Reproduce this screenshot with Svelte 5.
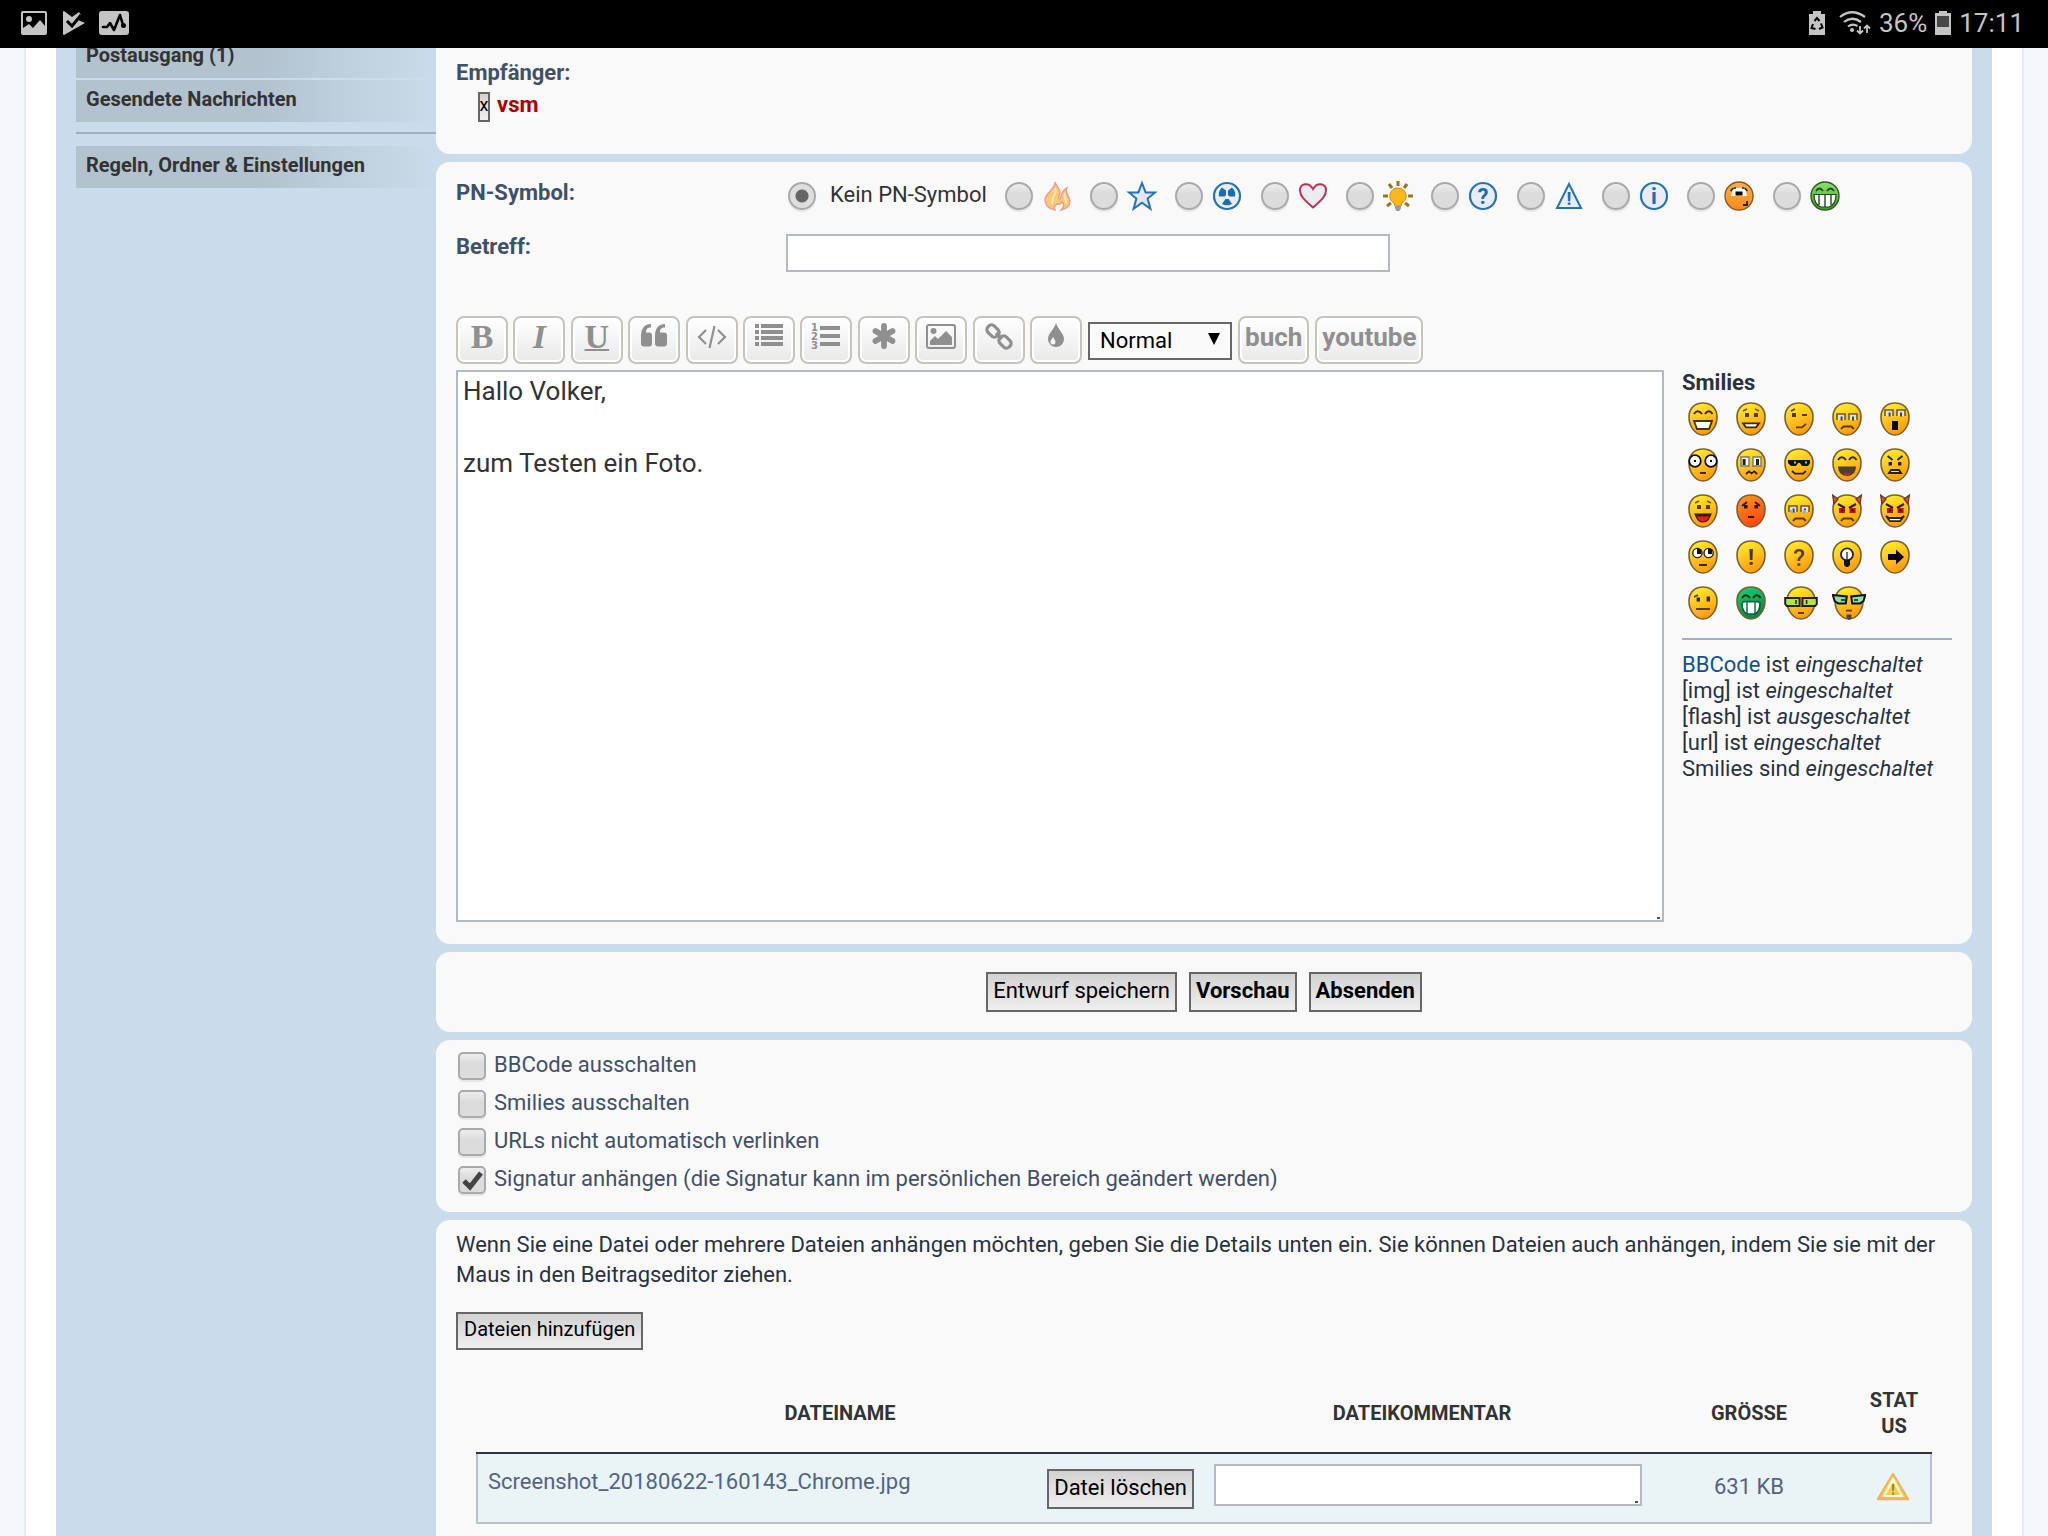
<script lang="ts">
	type Smiley = { name: string; fill?: string; wide?: boolean; art: string };

	let message = 'Hallo Volker,\n\nzum Testen ein Foto.';
	let subject = '';
	let comment = '';
	let icon = 'none';
	let size = 'Normal';

	const options = [
		{ id: 'bbcode', label: 'BBCode ausschalten', checked: false },
		{ id: 'smilies', label: 'Smilies ausschalten', checked: false },
		{ id: 'urls', label: 'URLs nicht automatisch verlinken', checked: false },
		{
			id: 'sig',
			label: 'Signatur anhängen (die Signatur kann im persönlichen Bereich geändert werden)',
			checked: true
		}
	];

	const status = [
		{ tag: '[img]', verb: 'ist', state: 'eingeschaltet' },
		{ tag: '[flash]', verb: 'ist', state: 'ausgeschaltet' },
		{ tag: '[url]', verb: 'ist', state: 'eingeschaltet' },
		{ tag: 'Smilies', verb: 'sind', state: 'eingeschaltet' }
	];

	const ring = '<circle cx="16" cy="16" r="13" fill="#e9edf2" stroke="#2273b8" stroke-width="2.2"/>';

	const symbols = [
		{ name: 'Feuer', art: '<path d="M14 2c1 4 5 6 5 10c0 3-2 4-1 7c3 0 1-8 8-11c-3 5 3 8 3 13c0 5-4 8-9 9c4-4 3-7 1-8c-1 2-3 3-5 2c-3 2-3 4-2 6c-6-1-10-5-10-11c1-7 10-9 10-17z" fill="#fbc877" stroke="#ef9c8c" stroke-width="1.400"/><path d="M14 8c2 5-1 7-2 10c-1 2 0 4-1 6M24 13c-2 4 2 6 1 10" fill="none" stroke="#ffeec4" stroke-width="1.800"/>' },
		{ name: 'Stern', art: '<path d="M16 3l3.600 9.400h9.400l-7.400 6.200l2.800 10.200l-8.400-6l-8.400 6l2.800-10.200l-7.400-6.200h9.400z" fill="#e4e8ee" stroke="#2273b8" stroke-width="2"/>' },
		{ name: 'Radioaktiv', art: ring + '<g fill="#1b6cb4"><path d="M11 7.500l4 3v4.500l-1.500 1.500H8Q7 11 11 7.500z"/><path d="M21 7.500l-4 3v4.500l1.500 1.500H24Q25 11 21 7.500z"/><path d="M14.500 19h3l3.500 5q-5 2.600-10 0z"/></g>' },
		{ name: 'Herz', art: '<path d="M16 27.500C10 22 3 17 3 10.500C3 3 12 2 16 9C20 2 29 3 29 10.500C29 17 22 22 16 27.500z" fill="#e9ecf0" stroke="#bd3453" stroke-width="2"/>' },
		{ name: 'Glühbirne', art: '<g stroke="#9a7426" stroke-width="3"><path d="M16 1v5M7 4l3 4M25 4l-3 4M1 16h5M26 16h5M5 26l4-3M27 26l-4-3"/></g><path d="M16 8a8 8 0 0 1 4 15l-1 3h-6l-1-3A8 8 0 0 1 16 8z" fill="#fdb81e" stroke="#d08c1e"/><path d="M13 26h6v2l-1.500 3h-3L13 28z" fill="#9a9a9a"/>' },
		{ name: 'Frage', art: ring + '<text x="16" y="24" font-family="Roboto" font-weight="700" font-size="22" text-anchor="middle" fill="#1b6cb4">?</text>' },
		{ name: 'Achtung', art: '<path d="M16 4L28 28H4z" fill="#e9edf2" stroke="#2273b8" stroke-width="2"/><text x="16" y="25" font-family="Roboto" font-weight="700" font-size="18" text-anchor="middle" fill="#1b6cb4">!</text>' },
		{ name: 'Info', art: ring + '<text x="16" y="24" font-family="Roboto" font-weight="700" font-size="22" text-anchor="middle" fill="#1b6cb4">i</text>' },
		{ name: 'Orange', art: '<circle cx="16" cy="16" r="14" fill="url(#orange)" stroke="#8a5a22" stroke-width="1.400"/><path d="M10 8h12l2 8H8z" fill="#fff"/><path d="M7.500 11l3-3M24.500 11l-3-3M11 8h2M19 8h2" stroke="#222" stroke-width="1.600"/><path d="M12.500 11.500h7v4h-7z" fill="#000"/><path d="M20 25h4v-4" fill="none" stroke="#222" stroke-width="1.800"/>' },
		{ name: 'Grün', art: '<circle cx="16" cy="16" r="14" fill="url(#lime)" stroke="#2c5e20" stroke-width="1.400"/><path d="M7 11q3.500-5 7 0M18 11q3.500-5 7 0" fill="none" stroke="#1d4d12" stroke-width="1.800"/><path d="M5 14.500h22q0 10-7 12.500h-8Q5 24.500 5 14.500z" fill="#fff" stroke="#1d4d12" stroke-width="1.200"/><path d="M10 14v11M16 14v13M22 14v11" stroke="#1d4d12" stroke-width="1.400"/>' }
	];

	const dots = '<path d="M4.500 5.500h2v2h-2zM9 5.500h2v2H9z" fill="#5a3c00"/><path d="M3.500 4.500l2-1M11.500 4.500l-2-1" stroke="#7a5600" stroke-width=".7"/>';
	const arcs = '<path d="M3 6q1.800-2.800 4 0M8.500 6q1.800-2.800 3.800 0" fill="none" stroke="#3a2800" stroke-width="1"/>';
	const frown = '<path d="M4.500 13.500l1.200-1.200h4l1.200 1.200" fill="none" stroke="#5a3c00" stroke-width="1"/>';
	const angry = '<path d="M3 5l3.500 2M12 5L8.500 7" stroke="#222" stroke-width="1.100"/><path d="M3.500 7h3v2.500h-3zM8.800 7h3v2.500h-3z" fill="#c01010"/><path d="M4.600 7.600h1v1h-1zM9.800 7.600h1v1h-1z" fill="#300"/>';
	const horns = '<path d="M.300.500L3 2.500L1 5zM14.700.500L12 2.500L14 5z" fill="#e2502c" stroke="#6a3020" stroke-width=".6"/>';
	const boxes = '<path d="M2.500 9V6h4v3M8.500 9V6h4v3" fill="#dfe3de" stroke="#6c5a2c" stroke-width=".8"/><path d="M4.300 7.300h1v2h-1zM10 7.300h1v2h-1z" fill="#444"/>';

	const smilies: Smiley[] = [
		{ name: 'Sehr fröhlich', art: arcs + '<path d="M3 9.500h9l-1.500 4h-6z" fill="#fff" stroke="#4a3200" stroke-width=".9"/>' },
		{ name: 'Lächeln', art: dots + '<path d="M3.500 10.700h8l-1.500 2h-5z" fill="#fff" stroke="#3a2800" stroke-width=".9"/>' },
		{ name: 'Zwinkern', art: '<path d="M4 5.500h2v2H4z" fill="#5a3c00"/><path d="M3.500 4.500l2-1M9 6.500h2.500M6 12.700h3l2-1.700" fill="none" stroke="#5a3c00" stroke-width=".9"/>' },
		{ name: 'Traurig', art: boxes + frown },
		{ name: 'Überrascht', art: '<g transform="translate(0 -2)">' + boxes + '</g><path d="M6 9.500h3v4.500H6z" fill="#000"/>' },
		{ name: 'Schockiert', art: '<g fill="#fff" stroke="#111" stroke-width=".9"><circle cx="3.500" cy="6.500" r="2.900"/><circle cx="11.500" cy="6.500" r="2.900"/></g><path d="M3 6h1v1H3zM11 6h1v1h-1z" fill="#000"/><path d="M6 12.500h3" stroke="#3a2800"/>' },
		{ name: 'Verwirrt', art: '<path d="M2.500 4.500h4v4.500h-4zM8.500 4.500h4v4.500h-4z" fill="#fff" stroke="#777" stroke-width=".7"/><path d="M3.300 5.500h1.500v3H3.300zM10 5.500h1.500v3H10z" fill="#222"/><path d="M5 13l1.500-1.300l1.300 1l1.300-1l1.500 1.300" fill="none" stroke="#222" stroke-width=".9"/>' },
		{ name: 'Cool', art: '<path d="M2 6h11v1.500l-1 1.500H9L8 7.500H7L6 9H3.500L2 7.500z" fill="#111"/><path d="M5 6.700h1v1H5zM10.500 6.700h1v1h-1z" fill="#bbb"/><path d="M4 11.500l1.500 1.300h4l1.500-1.300" fill="none" stroke="#222" stroke-width=".9"/>' },
		{ name: 'Lachen', art: arcs + '<path d="M3 9.200h9q0 4.500-4.500 4.800Q3 13.700 3 9.200z" fill="#4a4034"/><path d="M6 12.500h3l-.5 1.300h-2z" fill="#d02030"/>' },
		{ name: 'Verärgert', art: '<path d="M3.800 4l2.500 2M11.200 4L8.700 6" stroke="#222" stroke-width=".9"/><path d="M4.300 7h1.700v1.700H4.300zM9 7h1.700v1.700H9z" fill="#222"/><path d="M4.500 12.500l1-1.500h4l1 1.500z" fill="#ddd" stroke="#222" stroke-width=".9"/>' },
		{ name: 'Zunge', art: dots + '<path d="M3 9.800h9l-1 1.700H4z" fill="#3a1800"/><path d="M4 11h7q-1 3-3.500 3T4 11z" fill="#ee1a1a" stroke="#4a1a00" stroke-width=".6"/>' },
		{ name: 'Verlegen', fill: 'url(#red)', art: '<path d="M3 6l2.500-2M12 6L9.500 4M6 11.500h3" stroke="#3a1800" stroke-width="1"/><path d="M4 5.500h1.800v1.800H4zM9.200 5.500H11v1.800H9.200z" fill="#3a1800"/>' },
		{ name: 'Weinen', art: boxes + '<path d="M3 8h1.500v1.500H3zM9.500 8H11v1.500H9.500z" fill="#7bb8de"/>' + frown },
		{ name: 'Böse', art: horns + angry + frown },
		{ name: 'Teufel', art: horns + angry + '<path d="M3 11l1.500 1h6l1.500-1l-2 2.600h-5z" fill="#fff" stroke="#222" stroke-width=".9"/>' },
		{ name: 'Augen rollen', art: '<g fill="#fff" stroke="#222" stroke-width=".7"><circle cx="4.700" cy="6.500" r="2.300"/><circle cx="10.300" cy="6.500" r="2.300"/></g><path d="M4.500 4.500h2v2.500h-2zM10 4.500h2v2.500h-2z" fill="#111"/><path d="M5.500 12.500h4" stroke="#3a2800"/>' },
		{ name: 'Ausruf', art: '<text x="7.500" y="12.500" font-family="Roboto" font-weight="700" font-size="11" text-anchor="middle" fill="#4a3200">!</text>' },
		{ name: 'Frage', art: '<text x="7.500" y="13" font-family="Roboto" font-weight="500" font-size="12" text-anchor="middle" fill="#5a3c00">?</text>' },
		{ name: 'Idee', art: '<circle cx="7.500" cy="7.200" r="3" fill="#fff" stroke="#222" stroke-width=".9"/><path d="M7.200 6h.6v4h1.200v2.500l-1 1H7l-1-1V10h1.200z" fill="#111"/>' },
		{ name: 'Pfeil', art: '<path d="M4 7h4V4.800l4 3.700l-4 3.700V10H4z" fill="#000"/>' },
		{ name: 'Neutral', art: '<path d="M4.300 5.800H6v2H4.300zM9.300 5.200H11v2.600H9.300z" fill="#3a2800"/><path d="M3 5.500l2-1M4 11.500h7" stroke="#5a3c00" stroke-width=".9"/>' },
		{ name: 'Mr. Green', fill: 'url(#green)', art: arcs + '<path d="M3 8.500l1-.7h7l1 .7q0 5-3 5.500H6Q3 13.500 3 8.500z" fill="#fff" stroke="#063" stroke-width=".8"/><path d="M5.500 8v5.500M9.500 8v5.500" stroke="#063" stroke-width=".7"/>' },
		{ name: 'Geek', wide: true, art: '<path d="M-.400 6h7.200v4H.400L-.400 9zM8.200 6h7.200v3l-.8 1H8.200z" fill="#b4e838" stroke="#222" stroke-width="1"/><path d="M5 7v2M10.300 7v2" stroke="#232" stroke-width=".8"/><path d="M6 13.500h3" stroke="#5a3c00"/>' },
		{ name: 'Ober-Geek', wide: true, art: '<path d="M-.600 4.500l7 .700l-.500 3.500H2L.300 7.500zM15.600 4.500l-7 .700l.500 3.500h4l1.700-1.200z" fill="#8fdcb4" stroke="#111" stroke-width="1"/><path d="M3.500 7h2M10 7h2" stroke="#253" stroke-width=".9"/><path d="M6 12.300h3" stroke="#5a3c00" stroke-width=".9"/><path d="M6.300 14.300h2.400v1.700l-1.200 1l-1.200-1z" fill="#444"/>' }
	];

	const tools = [
		{ name: 'Zitat', art: '<path d="M2 14c0-7 3-12 10-12v3.500c-4 0-5 2-5 5h3a3 3 0 0 1 3 3v8a3 3 0 0 1-3 3H5a3 3 0 0 1-3-3zM16 14c0-7 3-12 10-12v3.500c-4 0-5 2-5 5h4a3 3 0 0 1 3 3v8a3 3 0 0 1-3 3h-6a3 3 0 0 1-3-3z" fill="#8f8f8f"/>' },
		{ name: 'Code', art: '<path d="M9 8l-7 7l7 7M21 8l7 7l-7 7M17.500 4l-5 22" fill="none" stroke="#8f8f8f" stroke-width="2.200"/>' },
		{ name: 'Liste', art: '<path d="M1 2h4v4H1zM7 2h22v4H7zM1 8h4v4H1zM7 8h22v4H7zM1 14h4v4H1zM7 14h22v4H7zM1 20h4v4H1zM7 20h22v4H7z" fill="#8f8f8f"/>' },
		{ name: 'Nummerierte Liste', art: '<path d="M9 4h20v4H9zM9 12h20v4H9zM9 20h20v4H9z" fill="#8f8f8f"/><g font-family="DejaVu Sans" font-weight="700" font-size="10" fill="#8f8f8f"><text x="0" y="9">1</text><text x="0" y="18">2</text><text x="0" y="27">3</text></g>' },
		{ name: 'Listenpunkt', art: '<path d="M15 4v20M6.500 9l17 10M23.500 9l-17 10" stroke="#8f8f8f" stroke-width="5.800" stroke-linecap="round"/>' },
		{ name: 'Bild', art: '<rect x="1" y="3" width="28" height="23" rx="2" fill="none" stroke="#8f8f8f" stroke-width="2"/><circle cx="7.500" cy="9" r="3" fill="#8f8f8f"/><path d="M4 23v-4l5-5l3 3l8-8l6 6v8z" fill="#8f8f8f"/>' },
		{ name: 'Link', art: '<g fill="none" stroke="#8f8f8f" stroke-width="3.200"><rect x="2.500" y="4.500" width="13" height="9" rx="4" transform="rotate(45 9 9)"/><rect x="14.500" y="15.500" width="13" height="9" rx="4" transform="rotate(45 21 20)"/><path d="M12 11l6 6"/></g>' },
		{ name: 'Farbe', art: '<path d="M15 1c2 7 8 10 8 16a8 8 0 0 1-16 0c0-6 6-9 8-16z" fill="#8f8f8f"/><path d="M12 15c1 2 2.500 3 2.500 5a2.500 2.500 0 0 1-5 0c0-2 1.500-3 2.500-5z" fill="#f5f5f5"/>' }
	];
</script>

<svg class="defs" aria-hidden="true">
	<defs>
		<linearGradient id="yellow" x1="0" y1="0" x2="0.4" y2="1">
			<stop offset="0.1" stop-color="#ffee2a" />
			<stop offset="1" stop-color="#ff9d12" />
		</linearGradient>
		<linearGradient id="red" x1="0" y1="0" x2="0.4" y2="1">
			<stop offset="0" stop-color="#ff9a24" />
			<stop offset="1" stop-color="#ff4a10" />
		</linearGradient>
		<linearGradient id="green" x1="0" y1="0" x2="0.4" y2="1">
			<stop offset="0" stop-color="#12d873" />
			<stop offset="1" stop-color="#07874e" />
		</linearGradient>
		<linearGradient id="orange" x1="0" y1="0" x2="0" y2="1">
			<stop offset="0" stop-color="#ffb04a" />
			<stop offset="1" stop-color="#f98a1c" />
		</linearGradient>
		<linearGradient id="lime" x1="0" y1="0" x2="0" y2="1">
			<stop offset="0" stop-color="#8fe070" />
			<stop offset="1" stop-color="#3f9a2c" />
		</linearGradient>
		<linearGradient id="warn" x1="0" y1="0" x2="0" y2="1">
			<stop offset="0" stop-color="#fff3b8" />
			<stop offset="1" stop-color="#f3c43c" />
		</linearGradient>
	</defs>
</svg>

<div class="screen">
	<header class="statusbar">
		<div class="notifications">
			<svg width="26" height="24" viewBox="0 0 26 24">
				<path fill-rule="evenodd" d="M2 0h22a2 2 0 0 1 2 2v20a2 2 0 0 1-2 2H2a2 2 0 0 1-2-2V2a2 2 0 0 1 2-2zM2 2v15l6-4l4 4l7-8l5 6V2zM8 5a3 3 0 1 1 0 6a3 3 0 0 1 0-6z" fill="#c4c4c4" />
			</svg>
			<svg width="24" height="24" viewBox="0 0 24 24">
				<path d="M3 0l8 6L18 1l2 3l-3 5l7 3L3 24q-1 0-1-1V1q0-1 1-1z" fill="#c4c4c4" />
				<path d="M6 10l5 5l9-11" fill="none" stroke="#000" stroke-width="3" />
			</svg>
			<svg width="30" height="24" viewBox="0 0 30 24">
				<rect width="30" height="24" rx="3" fill="#c4c4c4" />
				<path d="M4 16h4l3-4l4 7l6-15l3 10" fill="none" stroke="#000" stroke-width="2.6" stroke-linejoin="round" stroke-linecap="round" />
				<circle cx="24.500" cy="14.500" r="2.500" />
			</svg>
		</div>
		<div class="system">
			<svg width="16" height="24" viewBox="0 0 16 24">
				<path d="M0 3h4V0h8v3h4v21H0z" fill="#c4c4c4" />
				<path d="M5.500 10L8 7l2.500 3M12 12.500l1.500 4L10 18M6.500 18l-4-1l1.500-4" fill="none" stroke="#000" stroke-width="2" />
			</svg>
			<svg class="wifi" width="32" height="24" viewBox="0 0 32 24">
				<g fill="none" stroke="#c4c4c4" stroke-width="2.200">
					<path d="M1 6q12-9.500 25 0M5 11q8-6.500 17 0M9 15.500q4.500-3.500 9.500-.5" />
					<path d="M21 15v7M18 19.500l3 3l3-3M28 22v-7M25 17.500l3-3l3 3" stroke-width="1.800" />
				</g>
				<circle cx="13" cy="19" r="2" fill="#c4c4c4" />
			</svg>
			<span>36%</span>
			<svg width="16" height="24" viewBox="0 0 16 24">
				<path d="M0 2h4V0h8v2h4v22H0z" fill="#c4c4c4" />
				<path d="M2 5h12v11H2z" fill="#484848" />
			</svg>
			<span>17:11</span>
		</div>
	</header>

	<div class="wrap">
		<div class="panel">
			<nav class="menu">
				<a href="#outbox">Postausgang (1)</a>
				<a href="#sent">Gesendete Nachrichten</a>
				<hr />
				<a href="#options">Regeln, Ordner &amp; Einstellungen</a>
			</nav>

			<main>
				<section class="card recipients">
					<strong class="caption">Empfänger:</strong>
					<div class="recipient">
						<button class="btn remove" aria-label="vsm entfernen">x</button>
						<a href="#vsm">vsm</a>
					</div>
				</section>

				<section class="card editor">
					<div class="field">
						<span class="caption">PN-Symbol:</span>
						<div class="symbols">
							<label class="none">
								<input type="radio" value="none" bind:group={icon} />
								<span>Kein PN-Symbol</span>
							</label>
							<div class="symbol-list">
								{#each symbols as s}
									<label>
										<input type="radio" value={s.name} bind:group={icon} aria-label={s.name} />
										<svg width="32" height="32" viewBox="0 0 32 32">{@html s.art}</svg>
									</label>
								{/each}
							</div>
						</div>
					</div>
					<div class="field subject">
						<label class="caption" for="subject">Betreff:</label>
						<input id="subject" type="text" bind:value={subject} />
					</div>

					<div class="toolbar">
						<div class="tools">
							<button class="tool letter" aria-label="Fett">B</button>
							<button class="tool letter italic" aria-label="Kursiv">I</button>
							<button class="tool letter under" aria-label="Unterstrichen">U</button>
							{#each tools as t}
								<button class="tool" aria-label={t.name}>
									<svg width="30" height="30" viewBox="0 0 30 30">{@html t.art}</svg>
								</button>
							{/each}
						</div>
						<div class="size">
							<select aria-label="Schriftgröße" bind:value={size}>
								<option>Sehr klein</option>
								<option>Klein</option>
								<option>Normal</option>
								<option>Groß</option>
							</select>
						</div>
						<button class="tool word">buch</button>
						<button class="tool word">youtube</button>
					</div>

					<div class="compose">
						<div class="grip message">
							<textarea aria-label="Nachricht" spellcheck="false" bind:value={message}></textarea>
						</div>
						<aside>
							<strong>Smilies</strong>
							<div class="smilies">
								{#each smilies as s}
									<a href="#smiley" aria-label={s.name}>
										<svg
											width={s.wide ? 34 : 30}
											height="34"
											viewBox={s.wide ? '-1 0 17 17' : '0 0 15 17'}
										>
											<path
												d="M7.500.500C11.800.500 14.500 3.400 14.500 7.500C14.500 12 11.500 16.500 7.500 16.500C3.500 16.500.500 12 .500 7.500C.500 3.400 3.200.500 7.500.500z"
												fill={s.fill ?? 'url(#yellow)'}
												stroke="#7d6030"
												stroke-width=".8"
											/>
											{@html s.art}
										</svg>
									</a>
								{/each}
							</div>
							<hr />
							<p><a href="#bbcode">BBCode</a> ist <em>eingeschaltet</em></p>
							{#each status as s}
								<p>{s.tag} {s.verb} <em>{s.state}</em></p>
							{/each}
						</aside>
					</div>
				</section>

				<section class="card actions">
					<button class="btn">Entwurf speichern</button>
					<button class="btn bold">Vorschau</button>
					<button class="btn bold">Absenden</button>
				</section>

				<section class="card options">
					{#each options as o}
						<label><input type="checkbox" bind:checked={o.checked} /><span>{o.label}</span></label>
					{/each}
				</section>

				<section class="card attachments">
					<p>
						Wenn Sie eine Datei oder mehrere Dateien anhängen möchten, geben Sie die Details unten ein. Sie
						können Dateien auch anhängen, indem Sie sie mit der Maus in den Beitragseditor ziehen.
					</p>
					<button class="btn add">Dateien hinzufügen</button>
					<table>
						<thead>
							<tr>
								<th>DATEINAME</th>
								<th class="col-comment">DATEIKOMMENTAR</th>
								<th class="col-size">GRÖSSE</th>
								<th class="col-status">STATUS</th>
							</tr>
						</thead>
						<tbody>
							<tr>
								<td>
									<div class="file">
										<a href="#file">Screenshot_20180622-160143_Chrome.jpg</a>
										<button class="btn">Datei löschen</button>
									</div>
								</td>
								<td class="col-comment">
									<div class="grip">
										<textarea aria-label="Dateikommentar" bind:value={comment}></textarea>
									</div>
								</td>
								<td class="col-size">631 KB</td>
								<td class="col-status">
									<svg width="34" height="30" viewBox="0 0 34 30">
										<path d="M17 2L32 27H2z" fill="url(#warn)" stroke="#ebb75c" stroke-width="2.400" stroke-linejoin="round" />
										<path d="M17 8l9 16H8z" fill="#f0d04e" stroke="#fff8d8" stroke-width="2" />
										<path d="M15.800 12h2.600l-.5 7h-1.600zM16 20.500h2.200v2.200H16z" fill="#a88624" />
									</svg>
								</td>
							</tr>
						</tbody>
					</table>
				</section>
			</main>
		</div>
	</div>
</div>

<style>
	:global(body) {
		margin: 0;
		background: #f5f7fa;
	}

	.screen,
	.screen * {
		box-sizing: border-box;
	}

	.defs {
		position: absolute;
		width: 0;
		height: 0;
	}

	.screen {
		display: flex;
		flex-direction: column;
		min-height: 100vh;
		font-family: Roboto, sans-serif;
		font-size: 22px;
		line-height: 26px;
		color: #28313f;
	}

	svg {
		display: block;
		flex-shrink: 0;
	}

	button,
	input,
	select,
	textarea {
		font: inherit;
		margin: 0;
	}

	a {
		text-decoration: none;
	}

	hr {
		height: 2px;
		margin: 0;
		border: none;
		background: #a2afc0;
	}

	p {
		margin: 0;
	}

	/* status bar, the page scrolls below it */
	.statusbar {
		position: relative;
		z-index: 1;
		display: flex;
		justify-content: space-between;
		align-items: center;
		height: 48px;
		padding: 0 24px 2px 21px;
		background: #000;
		color: #c4c4c4;
		font-size: 26px;
	}

	.notifications {
		display: flex;
		gap: 14px;
	}

	.system {
		display: flex;
		align-items: center;
		gap: 8px;
	}

	.wifi {
		margin-left: 6px;
	}

	.wrap {
		display: flex;
		flex: 1;
		margin: 0 24px;
		padding: 0 30px;
		background: #fff;
		border: solid #e6e9ed;
		border-width: 0 2px;
	}

	.panel {
		display: flex;
		flex: 1;
		padding: 0 20px;
		background: #cadceb;
	}

	.menu {
		display: flex;
		flex-direction: column;
		gap: 2px;
		width: 360px;
		flex-shrink: 0;
		margin-top: -12px;
	}

	.menu a {
		height: 42px;
		padding: 6px 10px;
		background: linear-gradient(to right, #b2c2cf 50%, #cadceb 100%);
		color: #333;
		font-size: 20px;
		font-weight: 700;
	}

	.menu hr {
		margin: 8px 0 10px;
	}

	main {
		display: flex;
		flex-direction: column;
		gap: 8px;
		flex: 1;
		min-width: 0;
	}

	.card {
		padding: 0 20px;
		background: #f9f9f9;
		border-radius: 14px;
	}

	.caption {
		color: #425067;
		font-weight: 700;
	}

	.recipients {
		padding-top: 12px;
		padding-bottom: 32px;
		border-radius: 0 0 14px 14px;
	}

	.recipient {
		display: flex;
		gap: 7px;
		margin: 6px 0 0 22px;
	}

	.recipient a {
		color: #a00;
		font-weight: 700;
	}

	.btn {
		height: 40px;
		padding: 0 5px 2px;
		border: 2px solid #666;
		border-radius: 0;
		background: linear-gradient(#d2d2d2, #efefef);
		color: #000;
		white-space: nowrap;
	}

	.btn.bold {
		font-weight: 700;
	}

	.btn.remove {
		width: 12px;
		height: 30px;
		padding: 0 0 4px;
		font-size: 18px;
		line-height: 22px;
		display: flex;
		justify-content: center;
	}

	.editor {
		padding-top: 18px;
		padding-bottom: 22px;
	}

	.field {
		display: grid;
		grid-template-columns: 330px 1fr;
		margin-bottom: 22px;
	}

	.field.subject {
		margin-bottom: 44px;
	}

	.symbols {
		display: flex;
		gap: 18px;
		padding-left: 2px;
		color: #333;
	}

	.symbols label {
		display: flex;
		align-items: center;
		gap: 8px;
	}

	.symbols .none {
		gap: 14px;
	}

	.symbols span {
		padding-bottom: 2px;
	}

	.symbol-list {
		display: flex;
		justify-content: space-between;
		width: 836px;
	}

	input[type='radio'],
	input[type='checkbox'] {
		appearance: none;
		width: 28px;
		height: 28px;
		flex-shrink: 0;
		border: 2px solid #aaa;
		background: linear-gradient(#ededed, #dcdcdc 40%);
		box-shadow: 0 2px 1px rgba(0, 0, 0, 0.08);
	}

	input[type='radio'] {
		border-radius: 50%;
	}

	input[type='radio']:checked {
		background: radial-gradient(circle, #666 6px, #dedede 7px);
	}

	input[type='checkbox'] {
		border-radius: 5px;
	}

	input[type='checkbox']:checked {
		background:
			url("data:image/svg+xml,%3Csvg xmlns='http://www.w3.org/2000/svg' viewBox='0 0 24 24'%3E%3Cpath d='M4 13l6 6L21 5' fill='none' stroke='%23444' stroke-width='5'/%3E%3C/svg%3E"),
			linear-gradient(#ededed, #dcdcdc 40%);
	}

	input[type='text'],
	textarea {
		border: 2px solid #b4bac0;
		border-radius: 0;
		background: #fff;
		color: #333;
	}

	#subject {
		width: 604px;
		height: 38px;
		padding: 0 6px;
	}

	.toolbar {
		display: flex;
		align-items: center;
		gap: 6px;
		margin-bottom: 6px;
	}

	.tools {
		display: flex;
		justify-content: space-between;
		width: 626px;
	}

	.tool {
		display: flex;
		justify-content: center;
		align-items: center;
		width: 52px;
		height: 48px;
		padding: 0 0 6px;
		border: 2px solid #c7c3bf;
		border-radius: 8px;
		background: linear-gradient(#fff, #e9e9e9);
		box-shadow: inset 0 0 0 2px #fff;
		color: #8f8f8f;
		font-weight: 700;
	}

	.tool.letter {
		font-family: 'Liberation Serif', serif;
		font-size: 34px;
	}

	.tool.italic {
		font-style: italic;
	}

	.tool.under {
		text-decoration: underline;
		text-decoration-thickness: 2px;
	}

	.tool.word {
		width: auto;
		padding: 0 5px 6px;
		font-size: 26px;
	}

	.size {
		position: relative;
		width: 144px;
		padding-top: 2px;
	}

	.size::after {
		content: '';
		position: absolute;
		right: 12px;
		top: 13px;
		border: solid transparent;
		border-width: 12px 6px 0;
		border-top-color: #000;
		pointer-events: none;
	}

	.size select {
		display: block;
		appearance: none;
		width: 100%;
		height: 38px;
		padding: 0 10px;
		border: 2px solid #666;
		border-radius: 0;
		background: #fafafa;
		color: #000;
	}

	.compose {
		display: flex;
		gap: 18px;
	}

	.grip {
		position: relative;
	}

	.grip::after {
		content: '';
		position: absolute;
		right: 4px;
		bottom: 3px;
		width: 3px;
		height: 2px;
		background: #555;
	}

	.grip textarea {
		display: block;
		width: 100%;
		height: 42px;
		resize: none;
	}

	.message {
		flex: 1;
	}

	.message textarea {
		height: 552px;
		padding: 1px 5px;
		font-size: 26px;
		line-height: 36px;
	}

	aside {
		width: 270px;
	}

	aside p a {
		color: #105289;
	}

	aside hr {
		margin: 18px 0 12px;
	}

	.smilies {
		display: grid;
		grid-template-columns: repeat(5, 48px);
		row-gap: 12px;
		padding: 6px 0 0 6px;
	}

	.actions {
		display: flex;
		justify-content: center;
		gap: 12px;
		padding-top: 20px;
		padding-bottom: 20px;
	}

	.options {
		padding-top: 7px;
		padding-bottom: 13px;
		color: #425067;
	}

	.options label {
		display: flex;
		align-items: center;
		gap: 8px;
		height: 38px;
		padding-left: 2px;
	}

	.options span {
		padding-bottom: 3px;
	}

	.attachments {
		flex: 1;
		padding-top: 10px;
		border-radius: 14px 14px 0 0;
	}

	.attachments p {
		line-height: 30px;
	}

	.btn.add {
		display: block;
		height: 38px;
		margin: 22px 0 26px;
		padding: 0 6px 4px;
		font-size: 20px;
	}

	table {
		width: calc(100% - 40px);
		margin: 0 20px;
		table-layout: fixed;
		border-collapse: separate;
		border-spacing: 0;
	}

	th {
		padding: 11px 0 13px;
		border-bottom: 2px solid #333;
		color: #333;
		font-size: 20px;
		font-weight: 700;
	}

	td {
		height: 70px;
		padding: 8px 0 10px;
		background: #eaf3f6;
		border-bottom: 2px solid #bbc0cc;
		color: #536482;
	}

	td:first-child {
		padding: 2px 10px 0;
		border-left: 2px solid #bbc0cc;
	}

	td:last-child {
		border-right: 2px solid #bbc0cc;
	}

	th.col-comment {
		padding-right: 12px;
	}

	td.col-comment {
		padding: 0 10px 6px;
	}

	.file {
		display: flex;
		justify-content: space-between;
	}

	.file a {
		color: #536482;
	}

	.col-comment {
		width: 448px;
	}

	.col-size {
		width: 194px;
		text-align: center;
	}

	th.col-status,
	td.col-status {
		width: 86px;
		padding-left: 20px;
		padding-right: 10px;
		overflow-wrap: anywhere;
	}

	.col-status svg {
		margin: 0 auto;
	}
</style>
